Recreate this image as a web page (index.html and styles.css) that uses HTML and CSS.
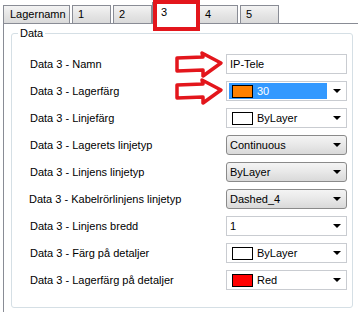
FILE: index.html
```html
<!DOCTYPE html>
<html lang="sv">
<head>
    <meta charset="UTF-8">
    <meta name="viewport" content="width=device-width, initial-scale=1.0">
    <title>Data 3</title>
    <link rel="stylesheet" href="styles.css">
</head>
<body>
    <div class="tabs">
        <div class="tab tab-wide">Lagernamn</div>
        <div class="tab">1</div>
        <div class="tab">2</div>
        <div class="tab active">3</div>
        <div class="tab">4</div>
        <div class="tab">5</div>
        <div class="mark"></div>
    </div>

    <div class="page">
        <fieldset class="group">
            <legend>Data</legend>
            <div class="rows">
                <label>Data 3 - Namn</label>
                <div class="field text">IP-Tele</div>

                <label>Data 3 - Lagerfärg</label>
                <div class="field combo">
                    <span class="selected"><span class="swatch orange"></span>30</span>
                    <span class="caret"></span>
                </div>

                <label>Data 3 - Linjefärg</label>
                <div class="field combo">
                    <span class="value"><span class="swatch"></span>ByLayer</span>
                    <span class="caret"></span>
                </div>

                <label>Data 3 - Lagerets linjetyp</label>
                <div class="field combo list">
                    <span class="value">Continuous</span>
                    <span class="caret"></span>
                </div>

                <label>Data 3 - Linjens linjetyp</label>
                <div class="field combo list">
                    <span class="value">ByLayer</span>
                    <span class="caret"></span>
                </div>

                <label class="nudge">Data 3 - Kabelrörlinjens linjetyp</label>
                <div class="field combo list">
                    <span class="value">Dashed_4</span>
                    <span class="caret"></span>
                </div>

                <label>Data 3 - Linjens bredd</label>
                <div class="field combo">
                    <span class="value">1</span>
                    <span class="caret"></span>
                </div>

                <label>Data 3 - Färg på detaljer</label>
                <div class="field combo">
                    <span class="value"><span class="swatch"></span>ByLayer</span>
                    <span class="caret"></span>
                </div>

                <label>Data 3 - Lagerfärg på detaljer</label>
                <div class="field combo">
                    <span class="value"><span class="swatch red"></span>Red</span>
                    <span class="caret"></span>
                </div>
            </div>
        </fieldset>
    </div>

    <!-- callout arrows pointing at the first two fields -->
    <svg class="arrow arrow-1" width="50" height="28" viewBox="0 0 50 28">
        <path d="M3 7 L29 6 L28 2 L47 12 L29 25 L29 19 L3 20 Z" />
    </svg>
    <svg class="arrow arrow-2" width="50" height="28" viewBox="0 0 50 28">
        <path d="M3 7 L29 6 L28 2 L47 12 L29 25 L29 19 L3 20 Z" />
    </svg>
</body>
</html>
```

FILE: styles.css
```css
body {
    margin: 0;
    width: 358px;
    height: 312px;
    overflow: hidden;
    position: relative;
    font-family: "Liberation Sans", Arial, sans-serif;
    font-size: 11px;
    color: #000;
    background-color: #fff;
}

.tabs {
    position: relative;
    display: flex;
    align-items: flex-end;
    height: 23px;
    padding-left: 3px;
}
.tab {
    box-sizing: border-box;
    width: 39px;
    height: 18px;
    margin-right: 2px;
    padding: 2px 0 0 5px;
    border: 1px solid #898c95;
    border-bottom: none;
    background: linear-gradient(#f3f3f3, #e3e3e3 60%, #dadada);
}
.tab-wide {
    width: 67px;
    padding-left: 6px;
}
.tab.active {
    position: relative;
    z-index: 1;
    width: 47px;
    height: 22px;
    margin: 0 0 -1px -2px;
    padding: 3px 0 0 8px;
    background: #fff;
}
.mark {
    position: absolute;
    z-index: 2;
    left: 153px;
    top: 0;
    width: 47px;
    height: 31px;
    box-sizing: border-box;
    border: 4px solid #e3161c;
}

.page {
    margin-left: 3px;
    height: 288px;
    border-top: 1px solid #898c95;
    border-left: 1px solid #898c95;
}

.group {
    box-sizing: border-box;
    width: 342px;
    height: 281px;
    margin: 3px 0 0 7px;
    padding: 0 0 0 6px;
    border: 1px solid #d5dfe5;
    border-radius: 3px;
}
.group legend {
    padding: 0 2px;
    line-height: 13px;
}

.rows {
    display: grid;
    grid-template-columns: 196px 121px;
    grid-auto-rows: 20px;
    row-gap: 7px;
    margin: 14px 0 0 12px;
}
.rows label {
    align-self: center;
    white-space: nowrap;
}
.rows .nudge {
    margin-left: -1px;
}

.field {
    box-sizing: border-box;
    display: flex;
    align-items: center;
    height: 20px;
    border: 1px solid #c9ccd1;
    background: #fff;
}
.text {
    padding-left: 3px;
}
.combo {
    padding: 0 5px 0 2px;
}
.combo .value,
.combo .selected {
    flex: 1;
    display: flex;
    align-items: center;
    height: 16px;
    padding-left: 1px;
}
.combo .selected {
    flex: 0 0 97px;
    margin-right: auto;
    background: #3399ff;
    color: #fff;
}
.list {
    border-color: #8a8a8a;
    border-radius: 3px;
    background: linear-gradient(#f4f4f4, #e8e8e8 50%, #d9d9d9);
}

.swatch {
    box-sizing: border-box;
    width: 21px;
    height: 13px;
    margin: 0 4px 0 2px;
    border: 1px solid #000;
    background: #fff;
}
.swatch.orange {
    background: #ff8000;
}
.swatch.red {
    background: #f00;
}

.caret {
    width: 0;
    height: 0;
    border-left: 4px solid transparent;
    border-right: 4px solid transparent;
    border-top: 4px solid #000;
}

.arrow {
    position: absolute;
    left: 174px;
}
.arrow path {
    fill: #fff;
    stroke: #e3161c;
    stroke-width: 3.5;
    stroke-linejoin: round;
}
.arrow-1 {
    top: 51px;
}
.arrow-2 {
    top: 78px;
}
```
